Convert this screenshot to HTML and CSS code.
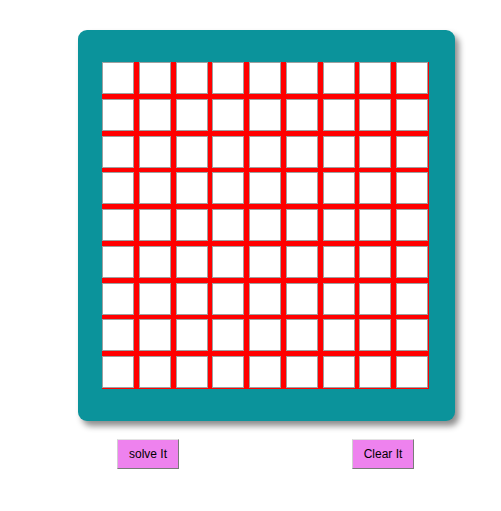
FILE: index.html
```html
<!DOCTYPE html>
<html lang="en">

<head>
    <meta charset="UTF-8">
    <meta name="viewport" content="width=device-width, initial-scale=1.0">
    <title>Sudoku Solver</title>

    <link rel="stylesheet" href="styles.css">

</head>

<body>
    <div class="board">
        <div class="grid" id="grid"></div>
    </div>

    <div class="buttons">
        <button class="btn" id="solve">solve It</button>
        <button class="btn" id="clear">Clear It</button>
    </div>

    <script>
        // 81 клетка судоку
        let grid = document.getElementById('grid');
        for (let i = 0; i < 81; i++) {
            let cell = document.createElement('input');
            cell.type = 'text';
            cell.maxLength = 1;
            cell.className = 'cell';
            grid.appendChild(cell);
        }
    </script>
</body>

</html>
```

FILE: styles.css
```css
* {
    font-family: "Liberation Sans", Arial, sans-serif;
}

body {
    margin: 8px;
}

.board {
    margin: 22px 0 0 70px;
    width: 377px;
    box-sizing: border-box;
    padding: 32px 26px 32px 24px;
    background-color: #0b939b;
    border-radius: 9px;
    box-shadow: 4px 5px 6px rgba(0, 0, 0, 0.45);
}

.grid {
    display: grid;
    grid-template-columns: repeat(9, 32px);
    grid-auto-rows: 32px;
    gap: 4.75px;
    padding: 0 1px 1px 0;
    background-color: #ff0000;
    width: fit-content;
}

.cell {
    width: 32px;
    height: 32px;
    box-sizing: border-box;
    margin: 0;
    padding: 0;
    border: 1px solid #a0a0a0;
    background-color: #fff;
    text-align: center;
    font-size: 16px;
    outline: none;
}

.buttons {
    width: 377px;
    margin: 18px 0 0 70px;
    box-sizing: border-box;
    padding: 0 41px 0 39px;
    display: flex;
    justify-content: space-between;
}

.btn {
    width: 62px;
    height: 30px;
    padding: 0;
    background-color: #ee82ee;
    border: 1px solid;
    border-color: #e2e2e2 #7a7a7a #7a7a7a #d0d0d0;
    font-size: 12px;
    color: #000;
}
```
